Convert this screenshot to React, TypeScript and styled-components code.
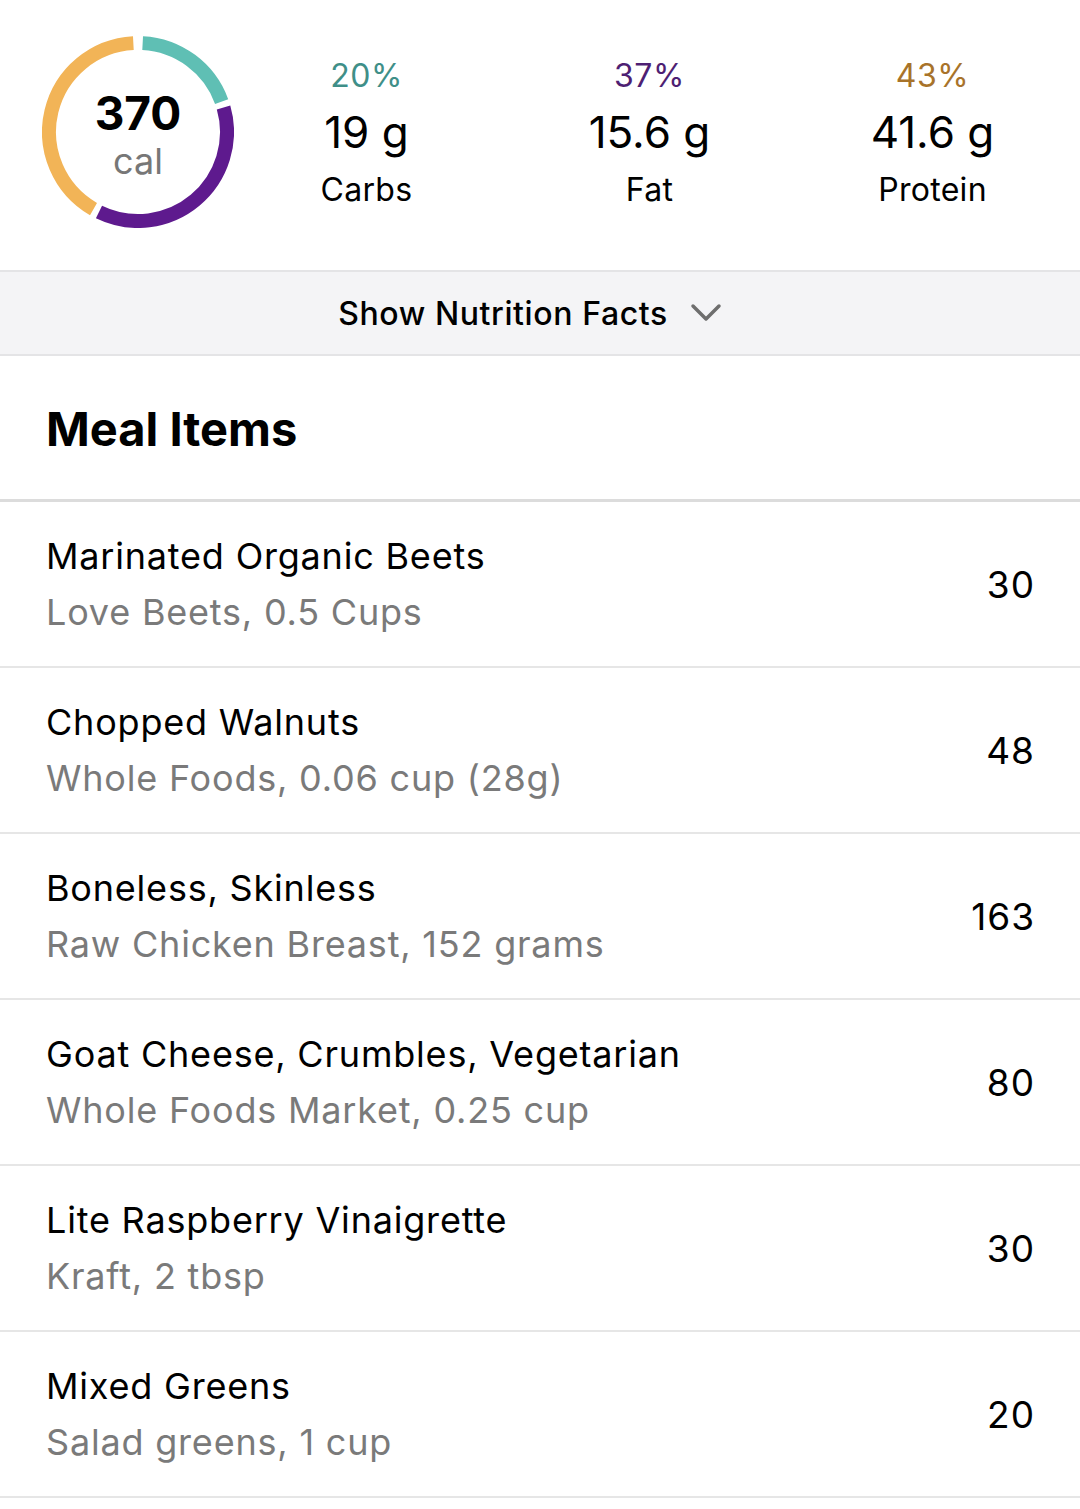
import styled, { createGlobalStyle } from 'styled-components'

const GlobalStyle = createGlobalStyle`
  html, body {
    margin: 0;
    padding: 0;
    background: #ffffff;
  }
  body {
    font-family: Inter, "Noto Sans", sans-serif;
    color: #000000;
  }
`

const Page = styled.div`
  width: 1080px;
  background: #ffffff;
`

const Summary = styled.div`
  display: flex;
  align-items: center;
  height: 270px;
  padding-left: 42px;
  box-sizing: border-box;
`

const Ring = styled.div`
  position: relative;
  width: 192px;
  height: 192px;
  flex-shrink: 0;
  margin-top: -6px;
`

const RingLabel = styled.div`
  position: absolute;
  inset: 0;
  display: flex;
  flex-direction: column;
  align-items: center;
  justify-content: center;

  .total {
    font-size: 46px;
    font-weight: 700;
    line-height: 42px;
    margin-top: 8px;
  }
  .unit {
    font-size: 36px;
    color: #777777;
    line-height: 38px;
    margin-top: 8px;
  }
`

const Macros = styled.div`
  display: grid;
  grid-template-columns: repeat(3, 283px);
  margin-left: -9px;
  margin-top: -4px;
`

const Macro = styled.div<{ $tone: string }>`
  display: flex;
  flex-direction: column;
  align-items: center;

  .pct {
    font-size: 32px;
    color: ${(p) => p.$tone};
    line-height: 36px;
    letter-spacing: 0.5px;
  }
  .amount {
    font-size: 44px;
    line-height: 50px;
    margin-top: 13px;
  }
  .label {
    font-size: 32px;
    line-height: 36px;
    margin-top: 15px;
    letter-spacing: 0.3px;
  }
`

const FactsBar = styled.div`
  display: flex;
  align-items: center;
  justify-content: center;
  gap: 22px;
  height: 82px;
  background: #f4f4f6;
  border-top: 2px solid #e4e4e6;
  border-bottom: 2px solid #e4e4e6;
  font-size: 32px;
  font-weight: 500;
  letter-spacing: 0.6px;
  padding-right: 20px;
`

const SectionHeader = styled.div`
  height: 146px;
  display: flex;
  align-items: center;
  padding-left: 46px;
  border-bottom: 3px solid #dcdcdc;
  font-size: 47px;
  font-weight: 700;
  padding-top: 2px;
  box-sizing: border-box;
`

const Row = styled.div`
  display: flex;
  align-items: center;
  justify-content: space-between;
  height: 166px;
  padding: 0 46px;
  border-bottom: 2px solid #e6e6e6;
  box-sizing: border-box;
`

const ItemText = styled.div`
  display: flex;
  flex-direction: column;
  gap: 12px;

  .name {
    font-size: 36px;
    line-height: 44px;
    letter-spacing: 0.8px;
  }
  .detail {
    font-size: 36px;
    line-height: 44px;
    letter-spacing: 0.8px;
    color: #7a7a7a;
  }
`

const Calories = styled.div`
  font-size: 37px;
  letter-spacing: 1px;
  margin-right: -1px;
`

const macros = [
  { pct: '20%', amount: '19 g', label: 'Carbs', tone: '#3f8f88' },
  { pct: '37%', amount: '15.6 g', label: 'Fat', tone: '#4e1f73' },
  { pct: '43%', amount: '41.6 g', label: 'Protein', tone: '#a8732a' },
]

const items = [
  { name: 'Marinated Organic Beets', detail: 'Love Beets, 0.5 Cups', cal: 30 },
  { name: 'Chopped Walnuts', detail: 'Whole Foods, 0.06 cup (28g)', cal: 48 },
  { name: 'Boneless, Skinless', detail: 'Raw Chicken Breast, 152 grams', cal: 163 },
  { name: 'Goat Cheese, Crumbles, Vegetarian', detail: 'Whole Foods Market, 0.25 cup', cal: 80 },
  { name: 'Lite Raspberry Vinaigrette', detail: 'Kraft, 2 tbsp', cal: 30 },
  { name: 'Mixed Greens', detail: 'Salad greens, 1 cup', cal: 20 },
]

function arc(cx: number, cy: number, r: number, a0: number, a1: number) {
  const p = (a: number) => {
    const rad = ((a - 90) * Math.PI) / 180
    return [cx + r * Math.cos(rad), cy + r * Math.sin(rad)]
  }
  const [x0, y0] = p(a0)
  const [x1, y1] = p(a1)
  const large = a1 - a0 > 180 ? 1 : 0
  return `M ${x0} ${y0} A ${r} ${r} 0 ${large} 1 ${x1} ${y1}`
}

function CalorieRing() {
  const segs = [
    { from: 3, to: 70, color: '#5fbfb4' },
    { from: 74, to: 206, color: '#5e1a8e' },
    { from: 210, to: 357, color: '#f2b457' },
  ]
  return (
    <Ring>
      <svg width="192" height="192" viewBox="0 0 192 192">
        {segs.map((s) => (
          <path key={s.color} d={arc(96, 96, 89, s.from, s.to)} fill="none" stroke={s.color} strokeWidth="14" />
        ))}
      </svg>
      <RingLabel>
        <span className="total">370</span>
        <span className="unit">cal</span>
      </RingLabel>
    </Ring>
  )
}

export default function App() {
  return (
    <Page>
      <GlobalStyle />
      <Summary>
        <CalorieRing />
        <Macros>
          {macros.map((m) => (
            <Macro key={m.label} $tone={m.tone}>
              <span className="pct">{m.pct}</span>
              <span className="amount">{m.amount}</span>
              <span className="label">{m.label}</span>
            </Macro>
          ))}
        </Macros>
      </Summary>
      <FactsBar>
        Show Nutrition Facts
        <svg width="32" height="20" viewBox="0 0 32 20">
          <path d="M3 3 L16 16 L29 3" fill="none" stroke="#6e6e6e" strokeWidth="3.5" strokeLinecap="round" strokeLinejoin="round" />
        </svg>
      </FactsBar>
      <SectionHeader>Meal Items</SectionHeader>
      {items.map((it) => (
        <Row key={it.name}>
          <ItemText>
            <span className="name">{it.name}</span>
            <span className="detail">{it.detail}</span>
          </ItemText>
          <Calories>{it.cal}</Calories>
        </Row>
      ))}
    </Page>
  )
}
